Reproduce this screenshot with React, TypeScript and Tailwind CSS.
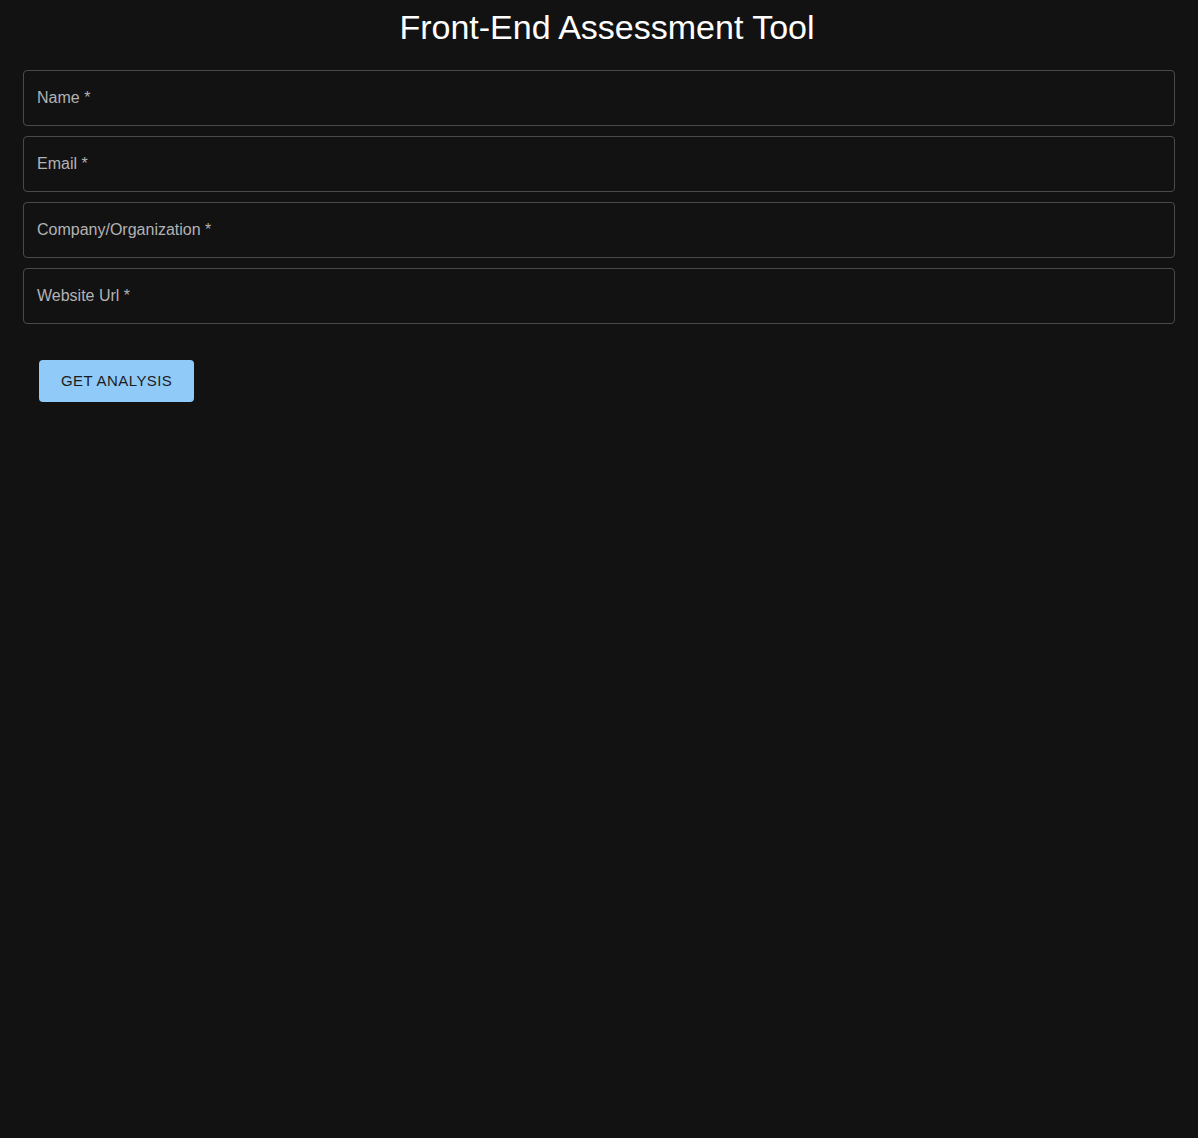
import React from "react";

const fields = ["Name", "Email", "Company/Organization", "Website Url"];

export default function App() {
  return (
    <div
      className="min-h-screen w-full bg-[#121212] px-[23px]"
      style={{ fontFamily: '"Liberation Sans", Arial, sans-serif' }}
    >
      <h1 className="pt-[7px] pl-[16px] text-center text-[34px] leading-[40px] font-normal text-white">
        Front-End Assessment Tool
      </h1>
      <form className="mt-[23px] flex flex-col gap-[10px]">
        {fields.map((f) => (
          <div
            key={f}
            className="flex h-[56px] items-center rounded-[4px] border border-[#4a4a4a] px-[13px]"
          >
            <span className="text-[16px] text-[#b3b3b3]">{f} *</span>
          </div>
        ))}
      </form>
      <div className="mt-[36px] ml-[16px]">
        <button
          type="button"
          className="h-[42px] rounded-[4px] bg-[#90caf9] px-[22px] text-[15px] uppercase tracking-[0.02857em] text-[#1c1c1c]"
        >
          Get Analysis
        </button>
      </div>
    </div>
  );
}
